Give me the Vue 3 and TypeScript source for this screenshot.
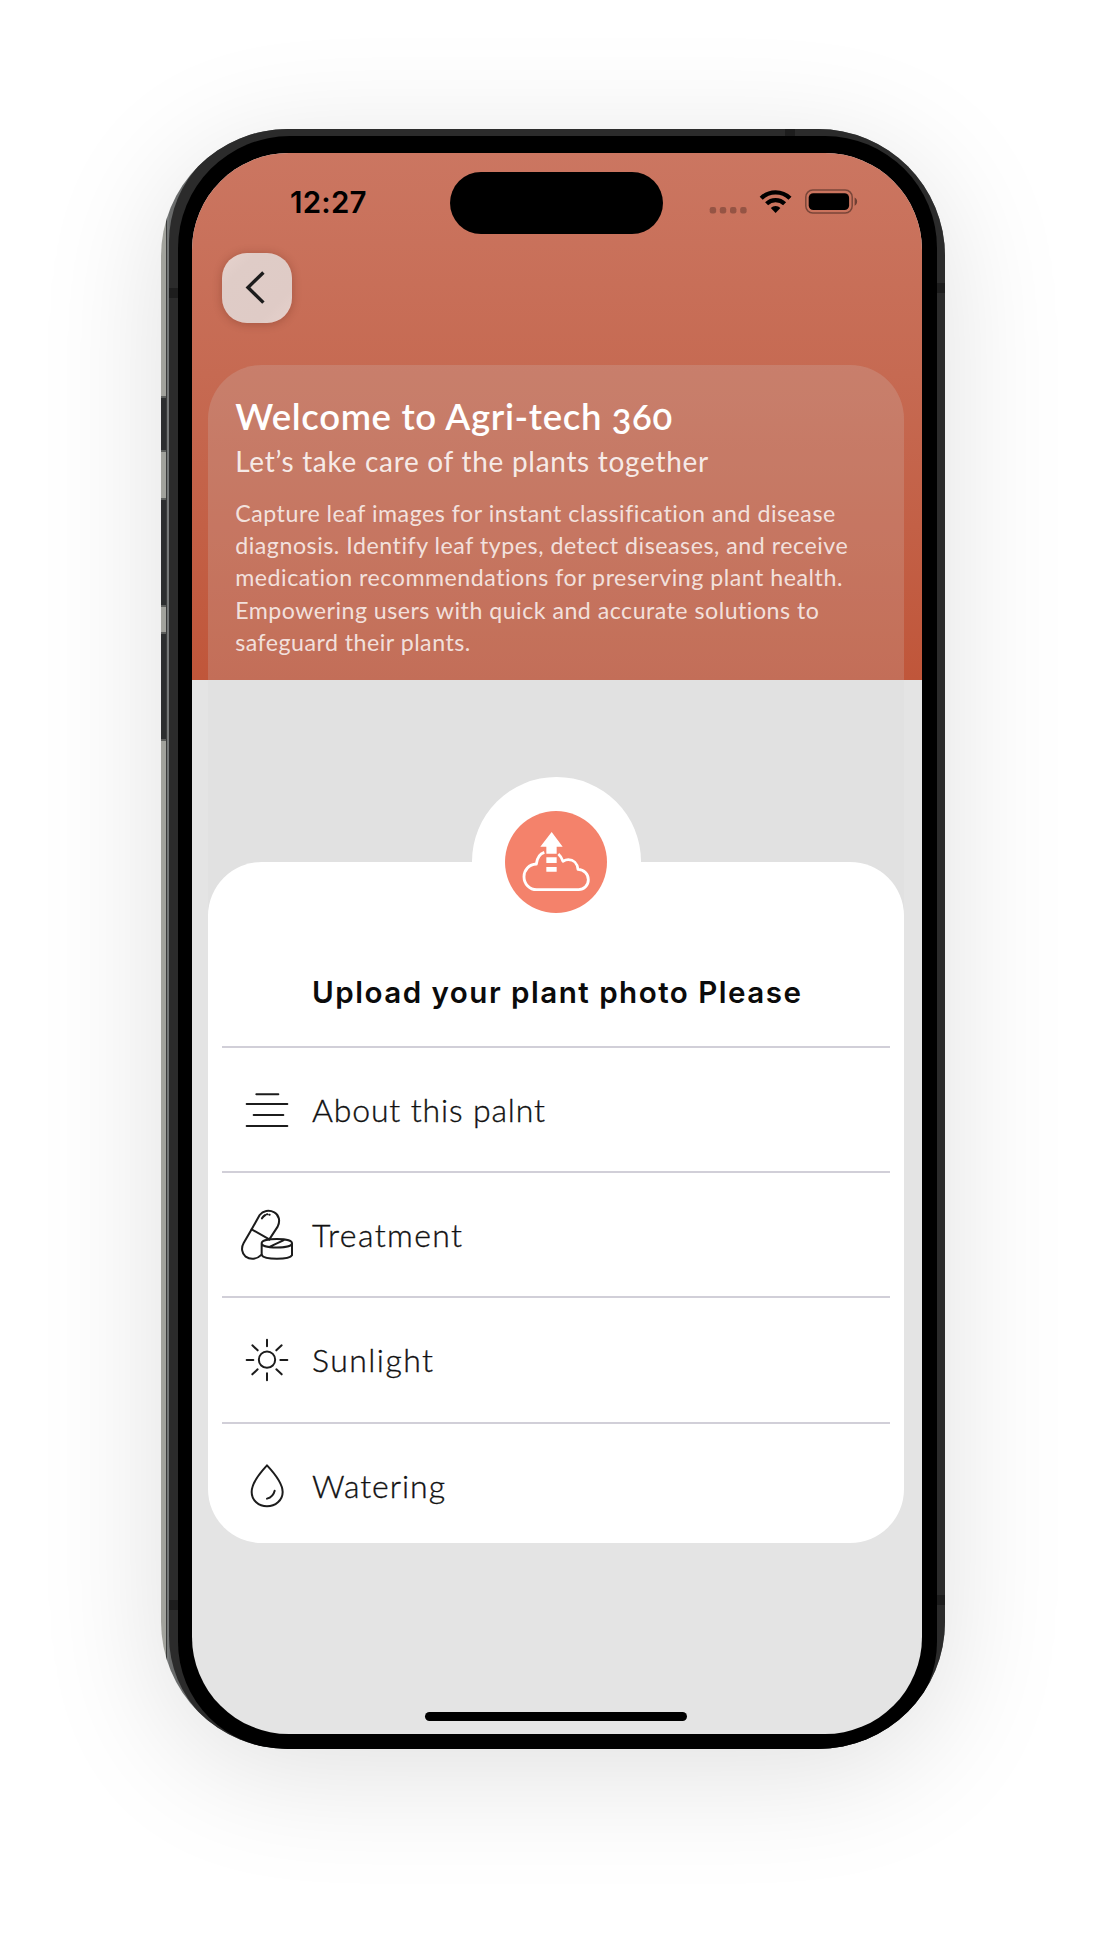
<script setup lang="ts">
interface Line {
  text: string
  width: number
}

interface Row extends Line {
  icon: 'lines' | 'pills' | 'sun' | 'drop'
}

const title: Line = { text: 'Welcome to Agri-tech 360', width: 437 }
const subtitle: Line = { text: 'Let’s take care of the plants together', width: 473 }

const body: Line[] = [
  { text: 'Capture leaf images for instant classification and disease', width: 600 },
  { text: 'diagnosis. Identify leaf types, detect diseases, and receive', width: 613 },
  { text: 'medication recommendations for preserving plant health.', width: 608 },
  { text: 'Empowering users with quick and accurate solutions to', width: 584 },
  { text: 'safeguard their plants.', width: 235 },
]

const rows: Row[] = [
  { text: 'About this palnt', width: 233, icon: 'lines' },
  { text: 'Treatment', width: 150, icon: 'pills' },
  { text: 'Sunlight', width: 121, icon: 'sun' },
  { text: 'Watering', width: 133, icon: 'drop' },
]

// Tracks a single line of text so that it fills the given measure.
const vFit = {
  mounted(el: HTMLElement, binding: { value: number }) {
    const count = (el.textContent ?? '').length - 1
    const natural = el.getBoundingClientRect().width
    el.style.letterSpacing = `${(binding.value - natural) / count}px`
  },
}
</script>

<template>
  <main class="stage">
    <div class="phone">
      <i class="side-button" />
      <i class="side-button volume-up" />
      <i class="side-button volume-down" />
      <div class="frame">
        <i class="antenna left-top" />
        <i class="antenna left-bottom" />
        <i class="antenna right-top" />
        <i class="antenna right-bottom" />
        <i class="antenna top-edge" />
        <div class="bezel">
          <div class="screen">
            <header class="hero">
              <div class="status">
                <div class="time"><span v-fit="76.5">12:27</span></div>
                <div class="island" />
                <svg class="indicators" viewBox="700 180 170 46">
                  <g fill="#000" opacity=".26">
                    <rect x="709.7" y="207" width="6.4" height="6.4" rx="2.2" />
                    <rect x="719.8" y="207" width="6.4" height="6.4" rx="2.2" />
                    <rect x="730" y="207" width="6.4" height="6.4" rx="2.2" />
                    <rect x="740.2" y="207" width="6.4" height="6.4" rx="2.2" />
                  </g>
                  <g fill="none" stroke="#000" stroke-width="4.3">
                    <path d="M761.2 198.2a20.5 20.5 0 0 1 28.8 0" />
                    <path d="M766.6 203.8a12.8 12.8 0 0 1 18 0" />
                  </g>
                  <path d="M775.6 213l-4.8-5a7 7 0 0 1 9.6 0z" />
                  <rect x="805.8" y="190.1" width="46.4" height="23" rx="7" fill="none" stroke="#000" stroke-opacity=".4" stroke-width="1.5" />
                  <rect x="808.7" y="193.2" width="40.4" height="16.8" rx="4.6" />
                  <path d="M854.6 197.6c3.4 1.4 3.4 6.8 0 8.2z" opacity=".45" />
                </svg>
              </div>
              <button class="back" aria-label="Back">
                <svg viewBox="222 253 70 70">
                  <path d="M263.4 272.6L248 287.4L263.4 302.6" fill="none" stroke="#1c1c1c" stroke-width="3.4" />
                </svg>
              </button>
              <section class="intro">
                <h1><span v-fit="title.width">{{ title.text }}</span></h1>
                <h2><span v-fit="subtitle.width">{{ subtitle.text }}</span></h2>
                <p>
                  <span v-for="line in body" :key="line.text" v-fit="line.width">{{ line.text }}</span>
                </p>
              </section>
            </header>

            <div class="lower">
              <div class="badge">
                <div class="disc">
                  <svg viewBox="196 152 306 306">
                    <path
                      d="M314 276C301 280 292 294 290 311C268 312 253 329 253 349C253 371 270 388 291 388H417C433 388 446 375 446 358C446 341 433 328 415 327C413 309 401 298 386 298C380 298 375 300 370 303C367 294 363 287 356 281"
                      fill="none" stroke="#fff" stroke-width="8.5" stroke-linejoin="round"
                    />
                    <path d="M336 215L369 259H351V280H320V259H302Z M320 291H351V308H320Z M320 320H351V334H320Z" fill="#fff" />
                  </svg>
                </div>
              </div>
              <section class="card">
                <h3><span v-fit="489">Upload your plant photo Please</span></h3>
                <ul>
                  <li v-for="row in rows" :key="row.icon">
                    <svg v-if="row.icon === 'lines'" viewBox="0 0 180 180">
                      <path d="M58 43H124M29 72H151M50 105H139M29 138H151" />
                    </svg>
                    <svg v-else-if="row.icon === 'pills'" viewBox="111 75 180 180">
                      <path d="M208 178L233 140C241 124 238 105 223 97C207 89 189 92 179 105L155 148L131 189C123 203 125 220 137 230C151 240 170 239 185 224" />
                      <path d="M155 148L208 178M186 115Q190 108 196 105M201 103H202M208 104H209" />
                      <path d="M185 190C185 173 276 173 276 190C276 207 185 207 185 190V226C194 240 268 240 276 226V190M210 200L250 181" />
                    </svg>
                    <svg v-else-if="row.icon === 'sun'" viewBox="111 451 180 180">
                      <circle cx="201" cy="540" r="24.5" />
                      <path d="M201 480V500M201 581V602M140 541H160M241 541H262M157 497L173 512M245 497L229 512M157 584L173 569M245 584L229 569" />
                    </svg>
                    <svg v-else viewBox="111 827 180 180">
                      <path d="M201 855C186 871 155 907 155 935C155 960 176 978 201 978C226 978 248 960 248 935C248 907 216 871 201 855Z" />
                      <path d="M224 931C221 944 214 951 201 955" />
                    </svg>
                    <span v-fit="row.width">{{ row.text }}</span>
                  </li>
                </ul>
              </section>
            </div>
            <i class="home-bar" />
          </div>
        </div>
      </div>
    </div>
  </main>
</template>

<style>
body {
  margin: 0;
  background: #fff;
}
</style>

<style scoped>
* {
  box-sizing: border-box;
}

.stage {
  width: 1106px;
  height: 1942px;
  padding: 129px 161px 0;
  overflow: hidden;
  background: #fff;
  font-family: Lato, "Open Sans", sans-serif;
}

.phone {
  position: relative;
  width: 784px;
  height: 1620px;
  padding-left: 8px;
  overflow: hidden;
  border-radius: 127px;
  background: linear-gradient(90deg, #a1a29c 0 4.5px, #3a3b3b 5px 6px, #747777 6px 7.6px, #6a6c6c 8px);
  box-shadow: 0 22px 124px rgba(0, 0, 0, 0.125);
}

.side-button,
.antenna {
  position: absolute;
}

.side-button {
  left: 0;
  top: 267px;
  width: 5px;
  height: 56px;
  border: solid #5c5e5c;
  border-width: 2px 0;
  background: #2c2e2f;
}

.volume-up {
  top: 369px;
  height: 109px;
}

.volume-down {
  top: 503px;
  height: 109px;
}

.frame {
  position: relative;
  height: 1620px;
  padding: 7px 8px 0 9px;
  overflow: hidden;
  border-radius: 113px;
  background: #2b2b2b;
}

.antenna {
  width: 9px;
  height: 10px;
  background: #1d1d1d;
}

.left-top { left: 0; top: 159px; }
.left-bottom { left: 0; top: 1471px; }
.right-top { right: 0; top: 154px; }
.right-bottom { right: 0; top: 1466px; }
.top-edge { left: 616px; top: 0; width: 10px; height: 7px; }

.bezel {
  position: relative;
  height: 1613px;
  padding: 17px 15.5px 15px 14px;
  border-radius: 112px 112px 107px 107px;
  background: #000;
}

.screen {
  position: relative;
  display: flex;
  flex-direction: column;
  height: 1581px;
  overflow: hidden;
  border-radius: 97px;
  background: #e4e4e4;
}

.hero {
  display: flex;
  flex-direction: column;
  height: 526.5px;
  padding: 19px 17.5px 0 16.2px;
  background: linear-gradient(#cb7661 0%, #c66a52 42%, #c0563a 100%);
}

.status {
  display: grid;
  grid-template-columns: 258px 213px 1fr;
  align-items: center;
  height: 62px;
  margin: 0 -17.5px 0 -16.2px;
}

.time {
  padding: 0 0 2px 98px;
  font: 600 29.5px/60px Inter, sans-serif;
  white-space: nowrap;
}

.island {
  height: 62px;
  border-radius: 32px;
  background: #000;
}

.indicators {
  width: 170px;
  height: 46px;
  margin-left: 37px;
}

.back {
  width: 70px;
  height: 70px;
  margin: 18.5px 0 0 13.8px;
  padding: 0;
  border: 0;
  border-radius: 25px;
  background: linear-gradient(135deg, #e7d3ce, #dfccc7 25%, #dfcbc6 75%, #e6d1cc);
  box-shadow: 0 1px 10px rgba(70, 20, 10, 0.28);
}

.back svg {
  display: block;
  width: 70px;
  height: 70px;
}

.intro {
  flex: 1;
  margin-top: 42px;
  padding: 30.5px 27px 0;
  border-radius: 54px 54px 0 0;
  background: rgba(210, 210, 210, 0.2);
  color: #fff;
  white-space: nowrap;
}

h1,
h2,
h3,
p,
ul {
  margin: 0;
  padding: 0;
  font-weight: 400;
}

h1 {
  font-size: 36.5px;
  font-weight: 600;
  line-height: 42px;
  font-variant-numeric: oldstyle-nums;
}

h2 {
  margin-top: 6px;
  color: rgba(255, 255, 255, 0.86);
  font-size: 28px;
  line-height: 36px;
}

p {
  display: flex;
  flex-direction: column;
  align-items: flex-start;
  margin-top: 18px;
  color: rgba(255, 255, 255, 0.8);
  font-size: 23.2px;
  line-height: 32.2px;
}

.lower {
  display: flex;
  flex-direction: column;
  align-items: center;
  height: 864px;
  margin: 0 17.5px 0 16.2px;
  padding-top: 97px;
  background: linear-gradient(#e1e1e1 0 250px, #e4e4e4 250px);
}

.badge {
  width: 169px;
  height: 169px;
  padding: 34.3px 33.5px;
  border-radius: 50%;
  background: #fff;
}

.disc {
  position: relative;
  z-index: 1;
  width: 102px;
  height: 102px;
  border-radius: 50%;
  background: #f4826b;
}

.disc svg {
  display: block;
}

.card {
  align-self: stretch;
  height: 681.5px;
  margin-top: -84px;
  padding: 0 13.8px;
  flex: none;
  border-radius: 54px;
  background: #fff;
}

h3 {
  height: 184.3px;
  padding: 112px 0 0 90px;
  color: #0b0b0b;
  font: 600 29.6px/36px Inter, sans-serif;
  white-space: nowrap;
}

ul {
  list-style: none;
}

li {
  display: flex;
  align-items: center;
  gap: 15px;
  height: 125.33px;
  padding: 0.5px 0 0 15px;
  border-top: 2px solid #d1cfd8;
  color: #111;
  font-size: 32px;
  font-weight: 300;
  line-height: 38px;
  white-space: nowrap;
  -webkit-text-stroke: 0.35px #111;
}

li svg {
  width: 60px;
  height: 60px;
  fill: none;
  stroke: #1c1c1c;
  stroke-width: 6;
  stroke-linecap: round;
  stroke-linejoin: round;
}

.home-bar {
  position: absolute;
  left: 233.3px;
  bottom: 13.5px;
  width: 262px;
  height: 8.5px;
  border-radius: 5px;
  background: #000;
}
</style>
